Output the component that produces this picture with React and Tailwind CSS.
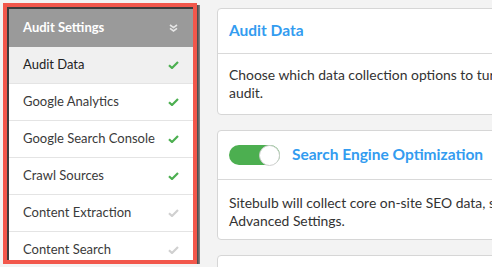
import React from 'react';

const items = [
  { label: 'Audit Data', done: true, active: true },
  { label: 'Google Analytics', done: true },
  { label: 'Google Search Console', done: true },
  { label: 'Crawl Sources', done: true },
  { label: 'Content Extraction', done: false },
  { label: 'Content Search', done: false },
];

const Check = ({ on }) => (
  <svg width="11" height="8" viewBox="0 0 11 8" className={on ? 'text-[#4caf50]' : 'text-[#d0d0d0]'}>
    <path d="M1 4.2 L4 7 L10 1" fill="none" stroke="currentColor" strokeWidth="2.2" strokeLinejoin="miter" />
  </svg>
);

const ChevronsDown = () => (
  <svg width="9" height="8" viewBox="0 0 9 8" className="text-[#e6e6e6]">
    <path d="M1 1 L4.5 3.6 L8 1 M1 4.4 L4.5 7 L8 4.4" fill="none" stroke="currentColor" strokeWidth="1.6" />
  </svg>
);

const Sidebar = () => (
  <div className="flex shrink-0 pt-[3px] pl-[3px]">
    <div className="w-[194px] h-[261px] border-4 border-[#f2574b] overflow-hidden">
      <div className="h-full border-l-2 border-t-2 border-[#3c3c3c] bg-white flex flex-col">
        <div className="h-[38px] shrink-0 bg-[#9a9a9a] flex items-center justify-between pl-[14px] pr-[15px]">
          <span className="text-[13px] font-bold text-white">Audit Settings</span>
          <ChevronsDown />
        </div>
        {items.map((it) => (
          <div
            key={it.label}
            className={`h-[37px] shrink-0 flex items-center justify-between pl-[14px] pr-[14px] border-b border-[#e4e4e4] ${
              it.active ? 'bg-[#f0f0f0]' : 'bg-white'
            }`}
          >
            <span className={`text-[13px] ${it.active ? 'text-[#222]' : 'text-[#3a3a3a]'}`}>{it.label}</span>
            <Check on={it.done} />
          </div>
        ))}
      </div>
    </div>
    <div className="w-[3px] h-[259px] mt-[2px] bg-gradient-to-r from-[#444] to-[#8a8a8a]" />
  </div>
);

const App = () => {
  return (
    <div className="w-[492px] h-[267px] bg-[#f3f3f3] flex overflow-hidden font-['Lato',_sans-serif]">
      <Sidebar />

      <div className="flex-1 overflow-hidden pl-[17px] pt-[8px] flex flex-col gap-[15px]">
        {/* Audit Data card */}
        <div className="w-[560px] shrink-0 bg-white border border-[#d6d6d6] rounded-[4px]">
          <div className="h-[45px] flex items-center px-[11px] border-b border-[#d9d9d9]">
            <span className="text-[15.5px] font-bold text-[#339cf0]">Audit Data</span>
          </div>
          <div className="px-[11px] pt-[12px] pb-[12px] text-[13.9px] leading-[18px] text-[#333] whitespace-nowrap">
            Choose which data collection options to turn on or off for this
            <br />
            audit.
          </div>
        </div>

        {/* SEO card */}
        <div className="w-[560px] shrink-0 bg-white border border-[#d6d6d6] rounded-[4px]">
          <div className="h-[49px] flex items-center gap-[12px] px-[11px] border-b border-[#d9d9d9]">
            <div className="w-[51px] h-[20px] rounded-full bg-[#4caf50] flex items-center justify-end">
              <div className="w-[21px] h-[21px] rounded-full bg-white border border-[#cfcfcf]" />
            </div>
            <span className="text-[15.5px] font-bold text-[#339cf0]">Search Engine Optimization</span>
          </div>
          <div className="px-[11px] pt-[14px] pb-[9px] text-[13.9px] leading-[18px] text-[#333] whitespace-nowrap">
            Sitebulb will collect core on-site SEO data, such as titles and meta, set in the
            <br />
            Advanced Settings.
          </div>
        </div>

        {/* next card */}
        <div className="w-[560px] h-[60px] shrink-0 bg-white border border-[#d6d6d6] rounded-[4px]" />
      </div>
    </div>
  );
};

export default App;
